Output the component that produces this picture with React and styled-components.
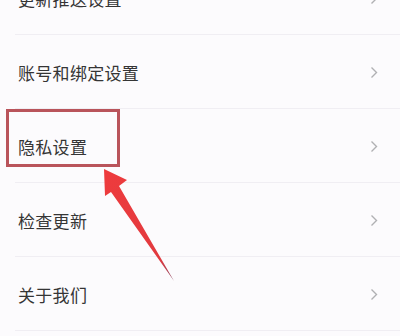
import React from 'react';
import styled, { createGlobalStyle } from 'styled-components';

const GlobalStyle = createGlobalStyle`
  html, body {
    margin: 0;
    padding: 0;
    background: #fcfbfd;
    overflow: hidden;
  }
  body {
    font-family: "Noto Sans CJK SC", "Noto Sans", sans-serif;
  }
`;

const Screen = styled.div`
  position: relative;
  width: 400px;
  height: 336px;
  overflow: hidden;
  background: #fcfbfd;
`;

const List = styled.ul`
  list-style: none;
  margin: -39px 0 0 0;
  padding: 0;
`;

const Row = styled.li`
  display: flex;
  align-items: center;
  justify-content: space-between;
  height: 74px;
  padding: 0 22px 0 18px;
  position: relative;

  &::after {
    content: '';
    position: absolute;
    left: 15px;
    right: 0;
    bottom: 0;
    height: 1px;
    background: #f0eef3;
  }
`;

const Label = styled.span`
  font-size: 17px;
  color: #353535;
  letter-spacing: 0.3px;
`;

const Chevron = styled.svg`
  width: 8px;
  height: 13px;
  flex-shrink: 0;
`;

const Highlight = styled.div`
  position: absolute;
  left: 6px;
  top: 109px;
  width: 108px;
  height: 52px;
  border: 3px solid #b9545b;
`;

const Arrow = styled.svg`
  position: absolute;
  left: 0;
  top: 0;
  pointer-events: none;
`;

const items = ['更新推送设置', '账号和绑定设置', '隐私设置', '检查更新', '关于我们'];

export default function App() {
  return (
    <Screen>
      <GlobalStyle />
      <List>
        {items.map((t) => (
          <Row key={t}>
            <Label>{t}</Label>
            <Chevron viewBox="0 0 8 13">
              <path d="M1.5 1.5 L6.5 6.5 L1.5 11.5" fill="none" stroke="#b0b0b3" strokeWidth="1.4" />
            </Chevron>
          </Row>
        ))}
      </List>
      <Highlight />
      <Arrow width="400" height="336" viewBox="0 0 400 336">
        <defs>
          <linearGradient id="ag" x1="0" y1="0" x2="1" y2="1">
            <stop offset="0" stopColor="#ee3b3d" />
            <stop offset="0.8" stopColor="#e23a3f" />
            <stop offset="1" stopColor="#8a4a66" />
          </linearGradient>
        </defs>
        <polygon
          points="104,169 127,180 119,186 174,281 111,192 105,196"
          fill="url(#ag)"
        />
      </Arrow>
    </Screen>
  );
}
